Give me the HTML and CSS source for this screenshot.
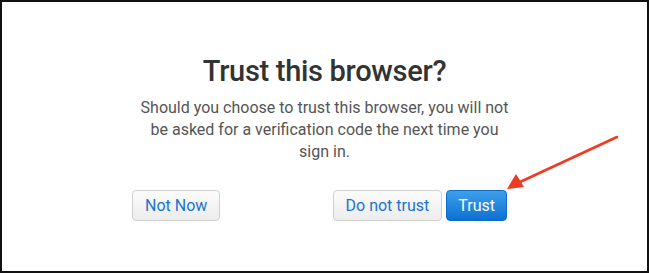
FILE: index.html
```html
<!DOCTYPE html>
<html>
<head>
<meta charset="utf-8">
<link rel="stylesheet" href="styles.css">
</head>
<body>
<div class="frame">
  <div class="dialog">
    <h1 class="title">Trust this browser?</h1>
    <p class="desc">Should you choose to trust this browser, you will not be asked for a verification code the next time you sign in.</p>
    <div class="actions">
      <button class="btn">Not Now</button>
      <div class="right">
        <button class="btn">Do not trust</button>
        <button class="btn primary">Trust</button>
      </div>
    </div>
  </div>
  <svg class="arrow" width="649" height="273" viewBox="0 0 649 273">
    <line x1="617" y1="137" x2="520" y2="182" stroke="#f23a22" stroke-width="2.5" stroke-linecap="round"/>
    <polygon points="507,189 516,174 524,187" fill="#f23a22"/>
  </svg>
</div>
</body>
</html>
```

FILE: styles.css
```css
html, body {
  margin: 0;
  padding: 0;
  background: #fff;
}
.frame {
  position: relative;
  box-sizing: border-box;
  width: 649px;
  height: 273px;
  border: 2px solid #111;
  overflow: hidden;
  font-family: Roboto, "Liberation Sans", Arial, sans-serif;
}
.dialog {
  display: flex;
  flex-direction: column;
  align-items: center;
  padding-top: 51px;
}
.title {
  margin: 0;
  font-size: 29px;
  line-height: 36px;
  font-weight: 500;
  color: #333;
  letter-spacing: -0.3px;
}
.desc {
  margin: 8px 0 0;
  width: 372px;
  text-align: center;
  font-size: 16px;
  line-height: 22px;
  color: #555;
}
.actions {
  align-self: flex-start;
  margin: 27px 0 0 130px;
  width: 375px;
  display: flex;
  justify-content: space-between;
}
.right {
  display: flex;
  gap: 4px;
}
.btn {
  height: 31px;
  box-sizing: border-box;
  padding: 0 12px;
  border: 1px solid #d0d0d0;
  border-radius: 4px;
  background: linear-gradient(#fcfcfc, #ececec);
  color: #1a74cf;
  font-family: Roboto, "Liberation Sans", Arial, sans-serif;
  font-size: 16px;
}
.btn.primary {
  border-color: #0d6cc7;
  background: linear-gradient(#3ea0ea, #0c70d1);
  color: #fff;
  padding: 0 11px;
}
.arrow {
  position: absolute;
  left: -2px;
  top: -2px;
  pointer-events: none;
}
```
